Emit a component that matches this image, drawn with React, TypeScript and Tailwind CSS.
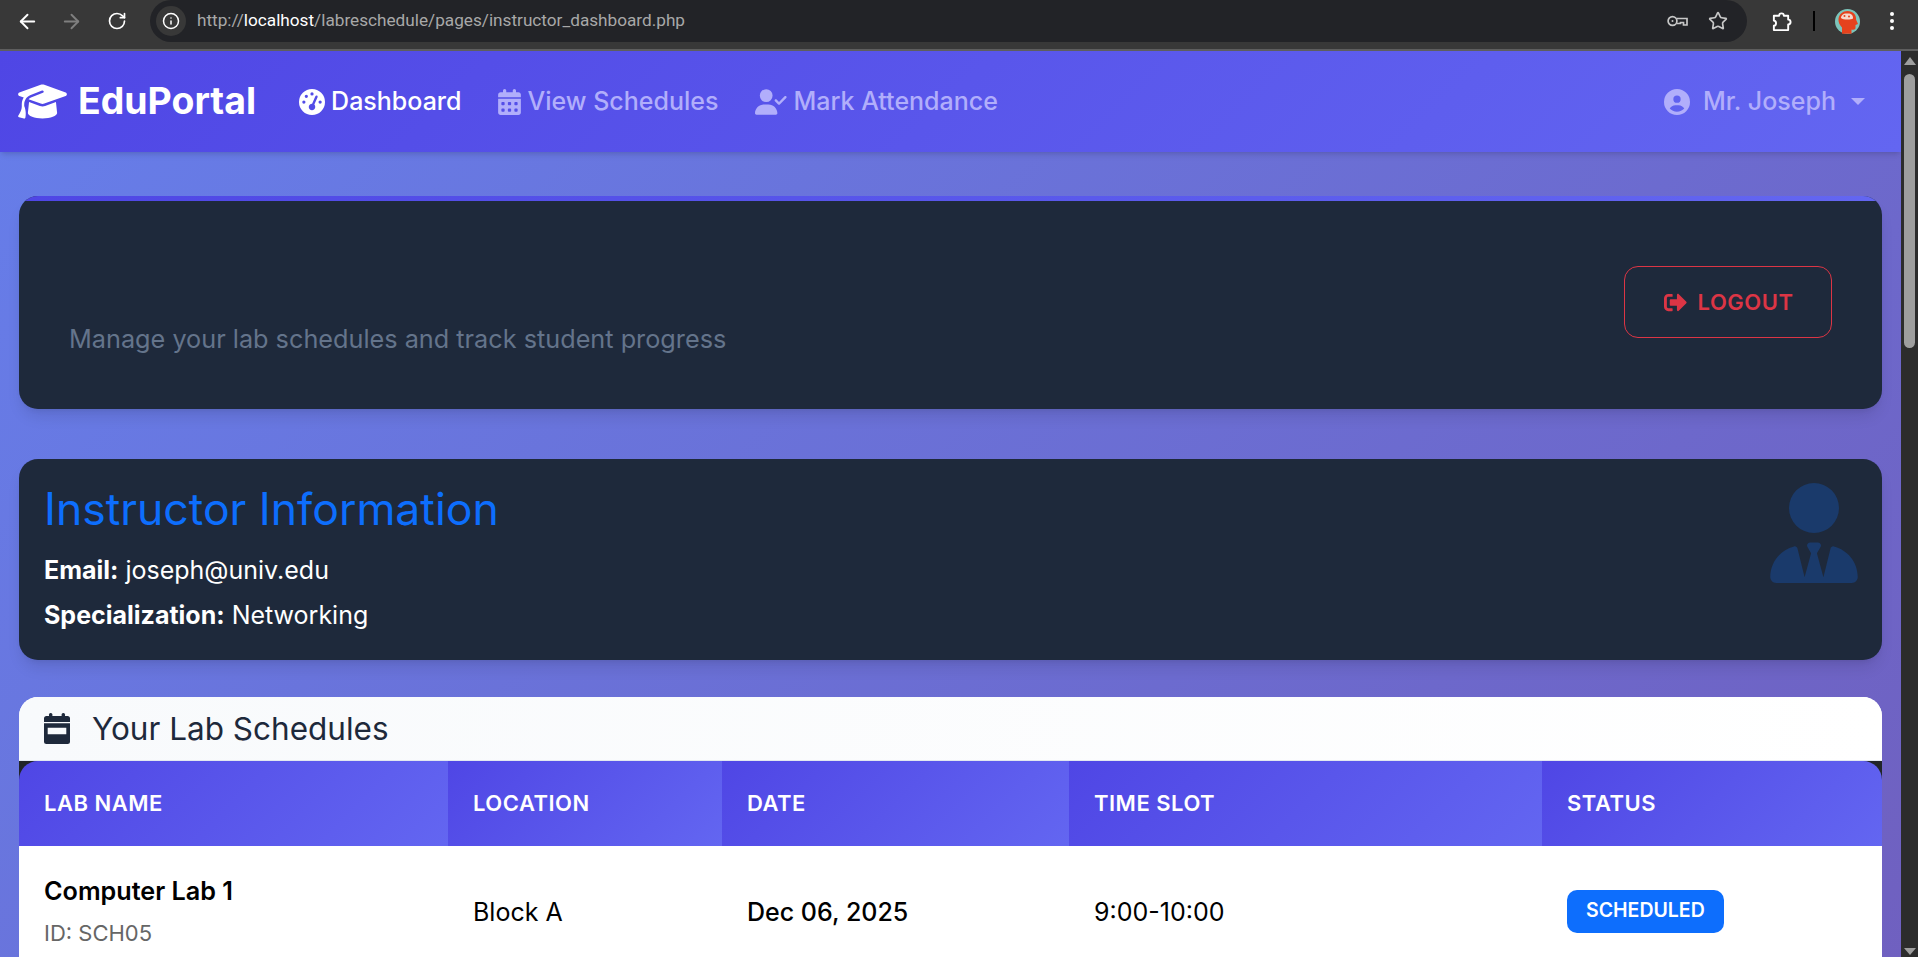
import React from "react";
import { FaGraduationCap, FaGaugeHigh, FaCalendarDays, FaUserCheck, FaCircleUser, FaUserTie } from "react-icons/fa6";
import { FaSignOutAlt } from "react-icons/fa";
import { LuArrowLeft, LuArrowRight, LuInfo, LuRotateCw, LuStar } from "react-icons/lu";

const Th = ({ w, children }: { w: string; children: React.ReactNode }) => (
  <div className={`${w} flex items-center px-[25px] bg-[linear-gradient(135deg,#4f46e5,#6366f1)] text-white text-[22px] font-semibold tracking-[0.5px] uppercase`}>{children}</div>
);

const KeyIcon = () => (
  <svg viewBox="0 0 21 14" className="w-[21px] h-[14px]" fill="none" stroke="currentColor" strokeWidth="1.7">
    <circle cx="5.5" cy="7" r="4.4" />
    <circle cx="5.5" cy="7" r="1" fill="currentColor" stroke="none" />
    <path d="M10 4.5H20V11H16.5V8.5H13.5V9.5H10" />
  </svg>
);

const PuzzleIcon = () => (
  <svg viewBox="0 0 22 22" className="w-[21px] h-[21px]" fill="none" stroke="white" strokeWidth="2" strokeLinejoin="round">
    <path d="M3 5H8.5A2.5 2.5 0 0 1 13.5 5H18V9A2.5 2.5 0 0 1 18 14V20H3V15.5A2.8 2.8 0 0 0 3 10Z" />
  </svg>
);

const Avatar = () => (
  <svg viewBox="0 0 25 25" className="w-[25px] h-[25px]">
    <circle cx="12.5" cy="12.5" r="12.5" fill="#7cc4ba" />
    <path d="M3.5 10C4 5 8 2 12.5 2C18 2 21.5 6 21 10.5L23 15L20.5 16V19C20.5 20.5 19 21 16.5 20.5V24.7H7V18.5C4.5 16 3.2 13 3.5 10Z" fill="#e5421d" />
    <path d="M6 9C6 6 9 4 12 4.5C15.5 4 18.5 6 18 9.5C16 11 8 11 6 9Z" fill="#f6d8cc" />
    <circle cx="9.5" cy="7" r="1" fill="#e5421d" />
    <circle cx="14" cy="7.5" r="1" fill="#e5421d" />
  </svg>
);

const ScheduleIcon = () => (
  <svg viewBox="0 0 26 31" className="w-[26px] h-[31px] shrink-0" fill="#1e293b">
    <rect x="5" y="0" width="3.4" height="7" rx="1.5" />
    <rect x="17.6" y="0" width="3.4" height="7" rx="1.5" />
    <path d="M2.5 3H23.5A2.5 2.5 0 0 1 26 5.5V9H0V5.5A2.5 2.5 0 0 1 2.5 3Z" />
    <path fillRule="evenodd" d="M0 10.2H26V28.5A2.5 2.5 0 0 1 23.5 31H2.5A2.5 2.5 0 0 1 0 28.5ZM3.7 14.7V21.3H22.3V14.7Z" />
  </svg>
);

export default function App() {
  return (
    <div className="w-[1918px] h-[957px] overflow-hidden flex flex-col font-['Inter',sans-serif] bg-[#2c2c2c]">
      <div className="h-[51px] shrink-0 bg-[#383838] border-b-2 border-[#5e5e5e] pb-[7px] flex items-center text-[#c7c7c7]">
        <LuArrowLeft className="ml-[16px] w-[23px] h-[23px] text-white" />
        <LuArrowRight className="ml-[21px] w-[23px] h-[23px] text-[#7f7f7f]" />
        <LuRotateCw className="ml-[24px] w-[20px] h-[20px] text-white" />
        <div className="ml-[23px] w-[1597px] h-[42px] rounded-full bg-[#222327] flex items-center font-['Roboto',sans-serif] text-[17.2px] pl-[6px]">
          <div className="w-[30px] h-[30px] rounded-full bg-[#383838] flex items-center justify-center"><LuInfo className="w-[18px] h-[18px] text-white" /></div>
          <span className="ml-[11px] text-[#a8a8a8]">http://<span className="text-white">localhost</span>/labreschedule/pages/instructor_dashboard.php</span>
          <div className="ml-auto flex items-center mr-[19px] gap-[20px]">
            <KeyIcon />
            <LuStar className="w-[20px] h-[20px]" />
          </div>
        </div>
        <div className="ml-[24px]"><PuzzleIcon /></div>
        <div className="ml-[21px] w-[2px] h-[20px] bg-black" />
        <div className="ml-[20px]"><Avatar /></div>
        <div className="ml-[30px] flex flex-col gap-[3px]">
          <div className="w-[4px] h-[4px] rounded-full bg-white" />
          <div className="w-[4px] h-[4px] rounded-full bg-white" />
          <div className="w-[4px] h-[4px] rounded-full bg-white" />
        </div>
      </div>
      <div className="flex flex-1 min-h-0">
        <div className="w-[1901px] overflow-hidden">
          <div className="h-[2900px] bg-[linear-gradient(135deg,#667eea_0%,#764ba2_100%)]">
            <nav className="h-[101px] flex items-center bg-[linear-gradient(135deg,#4f46e5,#6366f1)] px-[18px] shadow-md">
              <FaGraduationCap className="w-[49px] h-[39px] text-white" />
              <span className="ml-[11px] text-white text-[37.4px] font-bold">EduPortal</span>
              <div className="ml-[43px] flex items-center gap-[6px] text-white text-[25px] font-medium"><FaGaugeHigh className="w-[26px] h-[26px]" />Dashboard</div>
              <div className="ml-[37px] flex items-center gap-[6px] text-[#b1aefb] text-[25px] font-medium"><FaCalendarDays className="w-[23px] h-[26px]" />View Schedules</div>
              <div className="ml-[37px] flex items-center gap-[6px] text-[#b1aefb] text-[25px] font-medium"><FaUserCheck className="w-[32px] h-[26px]" />Mark Attendance</div>
              <div className="ml-auto mr-[18px] flex items-center text-[#b1aefb] text-[25px] font-medium">
                <FaCircleUser className="w-[26px] h-[26px] mr-[13px]" />Mr. Joseph
                <div className="ml-[15px] w-0 h-0 border-x-[7px] border-x-transparent border-t-[7px] border-t-[#b1aefb]" />
              </div>
            </nav>
            <div className="px-[19px] pt-[44px]">
              <div className="relative overflow-hidden h-[213px] rounded-[19px] bg-[#1e293b] flex items-center shadow-lg px-[50px]">
                <div className="absolute inset-x-0 top-0 h-[5px] bg-gradient-to-r from-[#4f46e5] to-[#6366f1]" />
                <p className="mt-[75px] text-[#64748b] text-[25.25px]">Manage your lab schedules and track student progress</p>
                <button className="ml-auto -mt-[1px] w-[208px] h-[72px] rounded-[14px] border border-[#dc3545] text-[#dc3545] flex items-center justify-center gap-[10px] text-[22px] font-semibold tracking-[0.5px]"><FaSignOutAlt className="w-[25px] h-[23px]" />LOGOUT</button>
              </div>
              <div className="mt-[50px] h-[201px] rounded-[19px] bg-[#1e293b] shadow-lg relative px-[25px] pt-[24px] text-white">
                <h2 className="text-[#0d6efd] text-[44.5px] leading-[52px] font-normal">Instructor Information</h2>
                <p className="mt-[17px] text-[25px] leading-[36px]"><b className="font-bold">Email:</b> joseph@univ.edu</p>
                <p className="mt-[9px] text-[25px] leading-[36px]"><b className="font-bold">Specialization:</b> Networking</p>
                <FaUserTie className="absolute right-[24px] top-[24px] w-[88px] h-[100px] text-[#1a3a6b]" />
              </div>
              <div className="mt-[37px] rounded-t-[19px] overflow-hidden bg-white">
                <div className="h-[64px] bg-gradient-to-r from-[#f8fafc] to-white border-b border-[#e2e8f0] flex items-center px-[25px] text-[#1e293b]">
                  <ScheduleIcon />
                  <span className="ml-[22px] text-[31.5px]">Your Lab Schedules</span>
                </div>
                <div className="bg-[#212529]">
                  <div className="h-[85px] flex rounded-t-[19px] overflow-hidden">
                    <Th w="w-[429px]">Lab Name</Th>
                    <Th w="w-[274px]">Location</Th>
                    <Th w="w-[347px]">Date</Th>
                    <Th w="w-[473px]">Time Slot</Th>
                    <Th w="flex-1">Status</Th>
                  </div>
                </div>
                <div className="flex text-black text-[25px] h-[130px] items-center bg-white">
                  <div className="w-[429px] px-[25px]">
                    <div className="font-semibold text-[25.2px] mt-[1px]">Computer Lab 1</div>
                    <div className="text-[#666666] text-[22px] mt-[6px]">ID: SCH05</div>
                  </div>
                  <div className="w-[274px] px-[25px] mt-[4px]">Block A</div>
                  <div className="w-[347px] px-[25px] mt-[4px] font-medium">Dec 06, 2025</div>
                  <div className="w-[473px] px-[25px] mt-[4px]">9:00-10:00</div>
                  <div className="flex-1 px-[25px]"><span className="inline-flex h-[43px] items-center bg-[#0d6efd] text-white text-[19.5px] font-semibold rounded-[10px] px-[19px]">SCHEDULED</span></div>
                </div>
              </div>
            </div>
          </div>
        </div>
        <div className="w-[17px] bg-[#2c2c2c] flex flex-col items-center relative">
          <div className="mt-[6px] w-0 h-0 border-x-[6px] border-x-transparent border-b-[8px] border-b-[#9e9e9e]" />
          <div className="mt-[9px] w-[11px] h-[274px] rounded-full bg-[#9e9e9e]" />
          <div className="absolute bottom-[2px] w-0 h-0 border-x-[6px] border-x-transparent border-t-[7px] border-t-[#9e9e9e]" />
        </div>
      </div>
    </div>
  );
}
